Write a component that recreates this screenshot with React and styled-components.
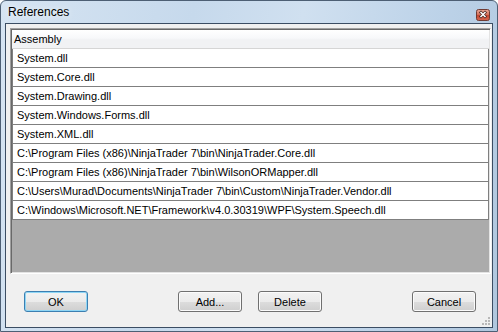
import styled, { createGlobalStyle } from "styled-components";

const GlobalStyle = createGlobalStyle`
  html, body {
    margin: 0;
    padding: 0;
    background: #ffffff;
  }
  * {
    box-sizing: border-box;
  }
`;

const Window = styled.div`
  width: 498px;
  height: 332px;
  display: flex;
  flex-direction: column;
  padding: 0 4px 3px 4px;
  border: 1px solid #4d5f74;
  border-radius: 6px 6px 0 0;
  background: linear-gradient(100deg, #d6e4f2 0%, #c6d9ec 35%, #d0e0f0 55%, #bcd2e8 80%, #b0c7de 100%);
  font-family: "Liberation Sans", Arial, sans-serif;
`;

const TitleBar = styled.div`
  height: 22px;
  display: flex;
  align-items: flex-start;
  justify-content: space-between;
  padding: 0 3px 0 3px;
`;

const Title = styled.span`
  margin-top: 4px;
  font-size: 12px;
  line-height: 15px;
  color: #000;
  text-shadow: 0 0 6px rgba(255, 255, 255, 0.9);
`;

const CloseButton = styled.div`
  width: 14px;
  height: 12px;
  margin-top: 8px;
  display: flex;
`;

const Client = styled.div`
  position: relative;
  flex: 1;
  display: flex;
  flex-direction: column;
  padding: 4px 1px 0 4px;
  border: 1px solid #3b4d63;
  background: #f0f0f0;
`;

const Grid = styled.div`
  width: 481px;
  height: 246px;
  display: flex;
  flex-direction: column;
  border: 1px solid;
  border-color: #a0a0a0 #ffffff #ffffff #a0a0a0;
  box-shadow: inset 1px 1px 0 #696969, inset -1px -1px 0 #e3e3e3;
  padding: 1px;
  background: #ababab;
  font-size: 11px;
  color: #000;
`;

const Header = styled.div`
  height: 19px;
  flex: none;
  display: flex;
  align-items: center;
  padding-left: 2px;
  border-bottom: 1px solid #d5d5d5;
  background: linear-gradient(#ffffff 0%, #f7f8fa 45%, #f1f2f4 55%, #f1f2f4 100%);
`;

const Row = styled.div`
  height: 19px;
  flex: none;
  display: flex;
  align-items: center;
  padding-left: 4px;
  background: #ffffff;
  border-left: 1px solid #7f7f7f;
  border-right: 1px solid #7f7f7f;
  border-bottom: 1px solid #7f7f7f;
  white-space: nowrap;
  overflow: hidden;
`;

const ButtonBar = styled.div`
  display: flex;
  align-items: center;
  justify-content: space-between;
  margin-top: 17px;
  padding: 0 15px 0 14px;
`;

const Group = styled.div`
  display: flex;
  gap: 16px;
`;

const Button = styled.button`
  width: 64px;
  height: 21px;
  padding: 0;
  border: 1px solid ${(p) => (p.$default ? "#3c7fb1" : "#707070")};
  border-radius: 3px;
  background: linear-gradient(#f2f2f2 0%, #ebebeb 50%, #dddddd 51%, #cfcfcf 100%);
  box-shadow: inset 0 0 0 1px ${(p) => (p.$default ? "#8fd6f5" : "#fbfbfb")};
  font-family: "Liberation Sans", Arial, sans-serif;
  font-size: 11px;
  color: #000;
`;

const Grip = styled.svg`
  position: absolute;
  right: 2px;
  bottom: 2px;
`;

const assemblies = [
  "System.dll",
  "System.Core.dll",
  "System.Drawing.dll",
  "System.Windows.Forms.dll",
  "System.XML.dll",
  "C:\\Program Files (x86)\\NinjaTrader 7\\bin\\NinjaTrader.Core.dll",
  "C:\\Program Files (x86)\\NinjaTrader 7\\bin\\WilsonORMapper.dll",
  "C:\\Users\\Murad\\Documents\\NinjaTrader 7\\bin\\Custom\\NinjaTrader.Vendor.dll",
  "C:\\Windows\\Microsoft.NET\\Framework\\v4.0.30319\\WPF\\System.Speech.dll",
];

const CloseIcon = () => (
  <svg width="14" height="12" viewBox="0 0 14 12">
    <defs>
      <linearGradient id="cl" x1="0" y1="0" x2="0" y2="1">
        <stop offset="0" stopColor="#eaa999" />
        <stop offset="0.45" stopColor="#d7745e" />
        <stop offset="0.5" stopColor="#c4452f" />
        <stop offset="1" stopColor="#d7664f" />
      </linearGradient>
    </defs>
    <rect x="0.5" y="0.5" width="13" height="11" rx="2" fill="url(#cl)" stroke="#6f3b33" />
    <path d="M5 3.5 L9 7.5 M9 3.5 L5 7.5" stroke="#4a2a25" strokeWidth="3" strokeLinecap="square" />
    <path d="M5 3.5 L9 7.5 M9 3.5 L5 7.5" stroke="#ffffff" strokeWidth="1.5" strokeLinecap="square" />
  </svg>
);

export default function App() {
  return (
    <>
      <GlobalStyle />
      <Window>
        <TitleBar>
          <Title>References</Title>
          <CloseButton>
            <CloseIcon />
          </CloseButton>
        </TitleBar>
        <Client>
          <Grid>
            <Header>Assembly</Header>
            {assemblies.map((a) => (
              <Row key={a}>{a}</Row>
            ))}
          </Grid>
          <ButtonBar>
            <Button $default>OK</Button>
            <Group>
              <Button>Add...</Button>
              <Button>Delete</Button>
            </Group>
            <Button>Cancel</Button>
          </ButtonBar>
          <Grip width="8" height="8" viewBox="0 0 8 8">
            {[
              [6, 0],
              [6, 3],
              [3, 3],
              [6, 6],
              [3, 6],
              [0, 6],
            ].map(([x, y]) => (
              <rect key={`${x}-${y}`} x={x} y={y} width="2" height="2" fill="#b8b8b8" />
            ))}
          </Grip>
        </Client>
      </Window>
    </>
  );
}
